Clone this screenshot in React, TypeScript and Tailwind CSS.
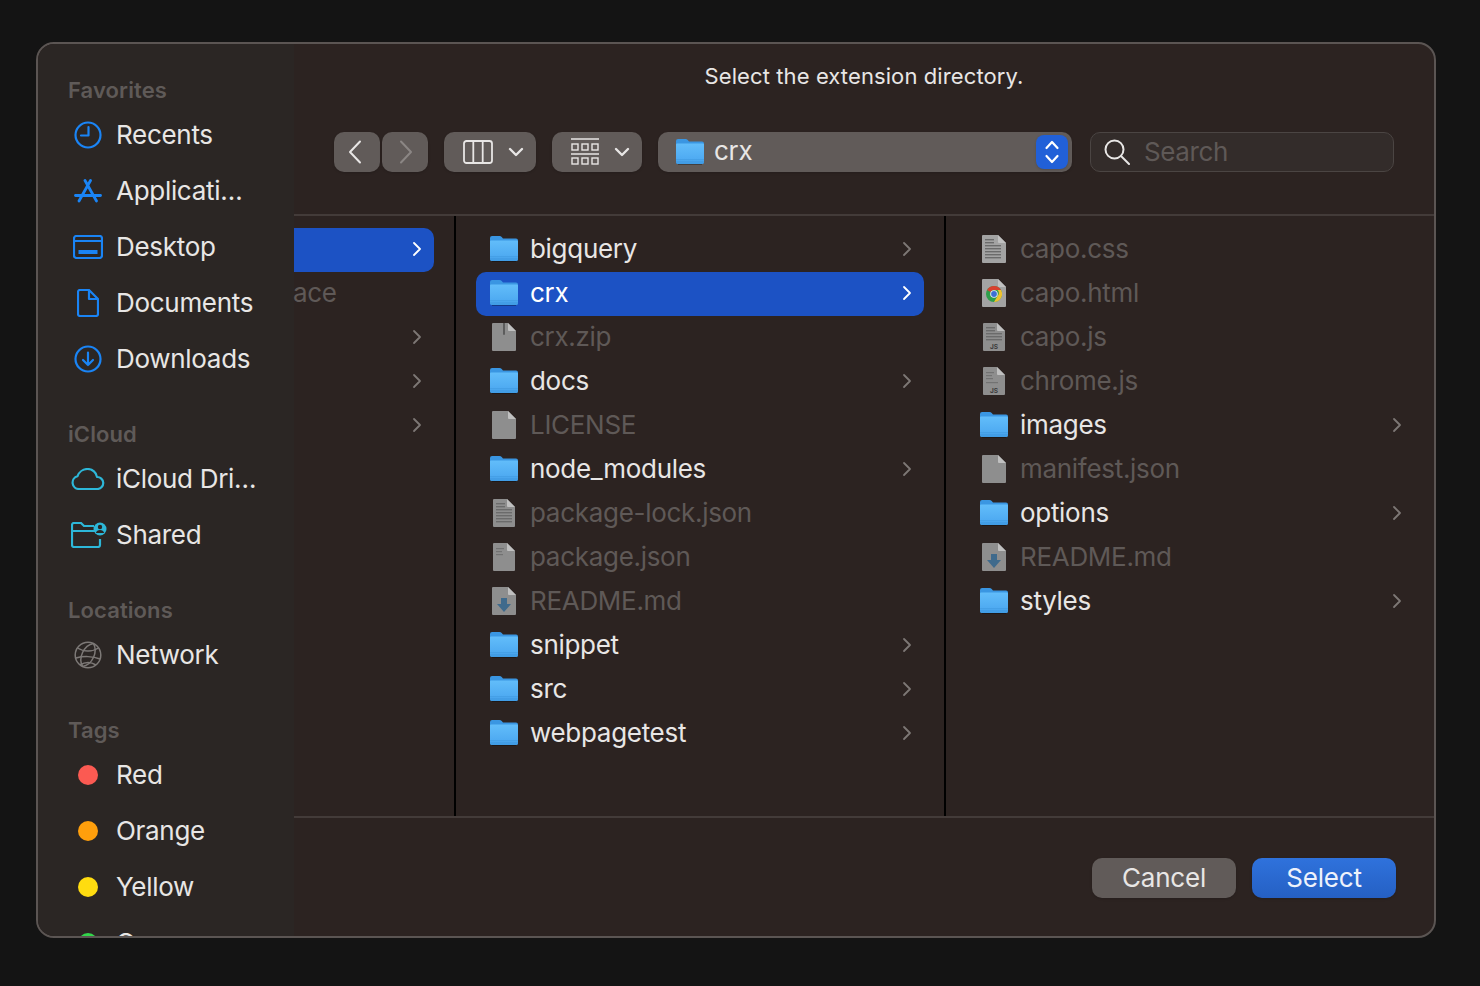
import type { ReactNode } from "react";

// Finder-style open panel, dark mode

const BLUE = "#1a84f5";
const CYAN = "#2db7d8";

type FileKind = "blank" | "zip" | "lines" | "sparse" | "md" | "css" | "chrome" | "js" | "jsLight";
type Entry = { name: string; folder?: boolean; file?: FileKind; selected?: boolean };

const MIDDLE: Entry[] = [
  { name: "bigquery", folder: true },
  { name: "crx", folder: true, selected: true },
  { name: "crx.zip", file: "zip" },
  { name: "docs", folder: true },
  { name: "LICENSE", file: "blank" },
  { name: "node_modules", folder: true },
  { name: "package-lock.json", file: "lines" },
  { name: "package.json", file: "sparse" },
  { name: "README.md", file: "md" },
  { name: "snippet", folder: true },
  { name: "src", folder: true },
  { name: "webpagetest", folder: true },
];

const RIGHT: Entry[] = [
  { name: "capo.css", file: "css" },
  { name: "capo.html", file: "chrome" },
  { name: "capo.js", file: "js" },
  { name: "chrome.js", file: "jsLight" },
  { name: "images", folder: true },
  { name: "manifest.json", file: "blank" },
  { name: "options", folder: true },
  { name: "README.md", file: "md" },
  { name: "styles", folder: true },
];

function Chevron({ color = "#7d7775" }: { color?: string }) {
  return (
    <svg width="10" height="16" viewBox="0 0 10 16" fill="none" stroke={color} strokeWidth="1.8" strokeLinecap="round" strokeLinejoin="round">
      <path d="M2 2l6 6-6 6" />
    </svg>
  );
}

function FolderIcon({ id, width = 28, height = 26 }: { id: string; width?: number; height?: number }) {
  return (
    <svg width={width} height={height} viewBox="0 0 28 26" className="shrink-0">
      <defs>
        <linearGradient id={id} x1="0" y1="0" x2="0" y2="1">
          <stop offset="0" stopColor="#62bdfa" />
          <stop offset="0.75" stopColor="#4fabf2" />
          <stop offset="1" stopColor="#3f9be4" />
        </linearGradient>
      </defs>
      <path d="M0 2a2 2 0 012-2h7.500c1 0 1.600.4 2.200 1l1.300 1.500h13A2 2 0 0128 4.500V23a2 2 0 01-2 2H2a2 2 0 01-2-2z" fill="#3a96e2" />
      <path d="M0 5.500a1 1 0 011-1h26a1 1 0 011 1V23a2 2 0 01-2 2H2a2 2 0 01-2-2z" fill={`url(#${id})`} />
      <path d="M0 20h28v.8H0zM0 22.500h28v.8H0z" fill="#3d94dc" opacity="0.6" />
      <path d="M2 25h24v1H2z" fill="#000" opacity="0.3" />
    </svg>
  );
}

function FileIcon({ kind }: { kind: FileKind }) {
  const narrow = kind === "lines" || kind === "sparse" || kind === "js" || kind === "jsLight";
  const x0 = narrow ? 1 : 0;
  const x1 = narrow ? 23 : 24;
  const body = kind === "css" || kind === "chrome" ? "#a3a3a3" : "#8e8e8e";
  return (
    <svg width="24" height="28" viewBox="0 0 24 28" className="shrink-0">
      <path d={`M${x0} 1a1 1 0 011-1h${x1 - x0 - 9}l8 8v19a1 1 0 01-1 1H${x0 + 1}a1 1 0 01-1-1z`} fill={body} />
      <path d={`M${x1 - 8} 0l8 8h-7a1 1 0 01-1-1z`} fill="#c0c0c0" />
      {kind === "zip" && <path d="M11 0h2v11a1 1 0 01-2 0z" fill="#5c5c5c" />}
      {(kind === "lines" || kind === "js" || kind === "css") && (
        <g fill="#6b6b6b">
          {[4, 7, 10, 13, 16, 19, 22].slice(0, kind === "js" ? 5 : 7).map((y) => (
            <rect key={y} x={x0 + 3} y={y} width={y < 9 ? 9 : 16} height="1.400" />
          ))}
        </g>
      )}
      {(kind === "sparse" || kind === "jsLight") && (
        <g fill="#727272">
          <rect x={x0 + 3} y="5" width="8" height="1.200" />
          <rect x={x0 + 3} y="8" width="6" height="1.200" />
          <rect x={x0 + 3} y="11" width="7" height="1.200" />
          {kind === "jsLight" && <rect x={x0 + 3} y="15" width="12" height="1.200" />}
        </g>
      )}
      {(kind === "js" || kind === "jsLight") && (
        <text x="12" y="26" textAnchor="middle" fontSize="6.500" fontWeight="700" fill="#3a3a3a" fontFamily="Inter, sans-serif">
          JS
        </text>
      )}
      {kind === "md" && <path d="M9 11h6v6h4l-7 8-7-8h4z" fill="#3f6a8c" />}
      {kind === "chrome" && (
        <g>
          <circle cx="12" cy="15" r="8" fill="#2e9e4b" />
          <path d="M5.100 11a8 8 0 0113.900 0H12a4 4 0 00-3.500 2z" fill="#d8402f" />
          <path d="M19 11a8 8 0 01-7 12l3.500-6a4 4 0 000-6z" fill="#efc12e" />
          <circle cx="12" cy="15" r="3.800" fill="#eeeeee" />
          <circle cx="12" cy="15" r="2.900" fill="#3d6fd4" />
        </g>
      )}
    </svg>
  );
}

function Row({ entry, id }: { entry: Entry; id: string }) {
  const textColor = entry.selected ? "text-white" : entry.folder ? "text-[#e8e6e5]" : "text-[#5f5957]";
  return (
    <div className={`flex h-[44px] items-center rounded-[10px] pb-[2px] pl-[14px] pr-[12px] ${entry.selected ? "bg-[#1c52c4]" : ""}`}>
      <div className="flex w-[28px] shrink-0 justify-center">
        {entry.folder ? <FolderIcon id={id} /> : <FileIcon kind={entry.file ?? "blank"} />}
      </div>
      <span className={`ml-[12px] flex-1 text-[26px] leading-none tracking-[-0.3px] ${textColor}`}>{entry.name}</span>
      {entry.folder && <Chevron color={entry.selected ? "#ffffff" : "#7d7775"} />}
    </div>
  );
}

function SidebarLabel({ children }: { children: ReactNode }) {
  return <div className="mb-[3px] h-[28px] pl-[30px] text-[22px] font-semibold leading-[28px] tracking-[0.1px] text-[#5f5a58]">{children}</div>;
}

function SidebarRow({ icon, label }: { icon: ReactNode; label: string }) {
  return (
    <div className="flex h-[56px] items-center pl-[30px]">
      <div className="flex w-[40px] shrink-0 items-center justify-center">{icon}</div>
      <span className="ml-[8px] whitespace-nowrap text-[26px] leading-none tracking-[-0.3px] text-[#e8e6e5]">{label}</span>
    </div>
  );
}

function Dot({ color }: { color: string }) {
  return <div className="h-[20px] w-[20px] rounded-full" style={{ background: color }} />;
}

function Sidebar() {
  return (
    <aside className="h-full w-[256px] shrink-0 overflow-hidden bg-[#2b2624] pt-[32px]">
      <SidebarLabel>Favorites</SidebarLabel>
      <SidebarRow
        label="Recents"
        icon={
          <svg width="28" height="28" viewBox="0 0 28 28" fill="none" stroke={BLUE} strokeWidth="2.200">
            <circle cx="14" cy="14" r="12.500" />
            <path d="M14.500 6v8.500H7" strokeLinecap="round" strokeLinejoin="round" />
          </svg>
        }
      />
      <SidebarRow
        label="Applicati…"
        icon={
          <svg width="28" height="24" viewBox="0 0 28 24" fill="none" stroke={BLUE} strokeWidth="2.800" strokeLinecap="round">
            <path d="M11 1.500L22.500 22M16.500 1.500L5 22" />
            <path d="M1.500 16.500h25" />
          </svg>
        }
      />
      <SidebarRow
        label="Desktop"
        icon={
          <svg width="30" height="24" viewBox="0 0 30 24" fill="none" stroke={BLUE} strokeWidth="2.200">
            <rect x="1" y="1" width="28" height="22" rx="2.500" />
            <path d="M1 6h28" />
            <rect x="5.500" y="15" width="19" height="4" fill={BLUE} stroke="none" />
          </svg>
        }
      />
      <SidebarRow
        label="Documents"
        icon={
          <svg width="22" height="28" viewBox="0 0 22 28" fill="none" stroke={BLUE} strokeWidth="2.200" strokeLinejoin="round">
            <path d="M3 1h9l9 9v15a2 2 0 01-2 2H3a2 2 0 01-2-2V3a2 2 0 012-2z" />
            <path d="M12 1v9h9" />
          </svg>
        }
      />
      <SidebarRow
        label="Downloads"
        icon={
          <svg width="28" height="28" viewBox="0 0 28 28" fill="none" stroke={BLUE} strokeWidth="2.200" strokeLinecap="round" strokeLinejoin="round">
            <circle cx="14" cy="14" r="12.500" />
            <path d="M14 7.500v12.500M9 15l5 5 5-5" />
          </svg>
        }
      />
      <div className="h-[33px]" />
      <SidebarLabel>iCloud</SidebarLabel>
      <SidebarRow
        label="iCloud Dri…"
        icon={
          <svg width="34" height="22" viewBox="0 0 34 22" fill="none" stroke={CYAN} strokeWidth="2.200" strokeLinejoin="round" className="-ml-[1px]">
            <path d="M8 21a6.500 6.500 0 01-1.500-12.800C8 4 12 1 16.500 1c5 0 9 3.500 9.500 8a6 6 0 01.500 12z" />
          </svg>
        }
      />
      <SidebarRow
        label="Shared"
        icon={
          <svg width="36" height="26" viewBox="0 0 36 26" fill="none" className="ml-[2px]">
            <path d="M26 9H1V3a2 2 0 012-2h7l3 3h10M1 9v14a2 2 0 002 2h24a2 2 0 002-2v-6" stroke={CYAN} strokeWidth="2.200" />
            <circle cx="29" cy="7" r="6.500" fill={CYAN} />
            <circle cx="29" cy="5" r="2.200" fill="#2b2624" />
            <path d="M24.800 11c.6-2 2.200-3 4.200-3s3.600 1 4.200 3z" fill="#2b2624" />
          </svg>
        }
      />
      <div className="h-[33px]" />
      <SidebarLabel>Locations</SidebarLabel>
      <SidebarRow
        label="Network"
        icon={
          <svg width="28" height="28" viewBox="0 0 28 28" fill="none" stroke="#7d7977" strokeWidth="1.500">
            <circle cx="14" cy="14" r="12.800" />
            <path d="M14 1.200C6 7 6 21 14 26.800M14 1.200C22 7 22 21 14 26.800" transform="rotate(25 14 14)" />
            <path d="M3.500 7c6 4 15 4 21 0M2 17c7-2 17-2 24 1M6 24c5-3 11-3 16 0" />
          </svg>
        }
      />
      <div className="h-[33px]" />
      <SidebarLabel>Tags</SidebarLabel>
      <SidebarRow label="Red" icon={<Dot color="#fb5a52" />} />
      <SidebarRow label="Orange" icon={<Dot color="#ff9f0c" />} />
      <SidebarRow label="Yellow" icon={<Dot color="#ffdc10" />} />
      <SidebarRow label="Green" icon={<Dot color="#32d74b" />} />
    </aside>
  );
}

function Toolbar() {
  return (
    <div className="mt-[42px] flex h-[40px] pl-[40px]">
      <div className="flex gap-[2px]">
        <div className="flex h-[40px] w-[46px] items-center justify-center rounded-[10px] bg-[#615b59] pr-[4px] shadow-sm">
          <svg width="14" height="24" viewBox="0 0 14 24" fill="none" stroke="#e8e6e5" strokeWidth="2" strokeLinecap="round" strokeLinejoin="round">
            <path d="M12 1.500L2 12l10 10.500" />
          </svg>
        </div>
        <div className="flex h-[40px] w-[46px] items-center justify-center rounded-[10px] bg-[#615b59] pl-[2px] shadow-sm">
          <svg width="14" height="24" viewBox="0 0 14 24" fill="none" stroke="#8b8684" strokeWidth="2" strokeLinecap="round" strokeLinejoin="round">
            <path d="M2 1.500L12 12 2 22.500" />
          </svg>
        </div>
      </div>
      <div className="ml-[16px] flex h-[40px] w-[92px] items-center rounded-[10px] bg-[#615b59] pl-[19px] shadow-sm">
        <svg width="30" height="24" viewBox="0 0 30 24" fill="none" stroke="#e8e6e5" strokeWidth="1.800">
          <rect x="1" y="1" width="28" height="22" rx="2.500" />
          <path d="M10.300 1v22M19.700 1v22" />
        </svg>
        <svg width="16" height="10" viewBox="0 0 16 10" fill="none" stroke="#e8e6e5" strokeWidth="2.400" strokeLinecap="round" strokeLinejoin="round" className="ml-[15px]">
          <path d="M2 2l6 6 6-6" />
        </svg>
      </div>
      <div className="ml-[16px] flex h-[40px] w-[90px] items-center rounded-[10px] bg-[#615b59] pl-[19px] shadow-sm">
        <svg width="28" height="28" viewBox="0 0 28 28" fill="none" stroke="#e8e6e5" strokeWidth="1.400">
          <path d="M0 1h28M0 16h28" strokeWidth="1.600" />
          <rect x="1" y="6" width="6" height="6" />
          <rect x="11" y="6" width="6" height="6" />
          <rect x="21" y="6" width="6" height="6" />
          <rect x="1" y="20" width="6" height="6" />
          <rect x="11" y="20" width="6" height="6" />
          <rect x="21" y="20" width="6" height="6" />
        </svg>
        <svg width="16" height="10" viewBox="0 0 16 10" fill="none" stroke="#e8e6e5" strokeWidth="2.400" strokeLinecap="round" strokeLinejoin="round" className="ml-[15px]">
          <path d="M2 2l6 6 6-6" />
        </svg>
      </div>
      <div className="ml-[16px] flex h-[40px] w-[414px] items-center rounded-[10px] bg-[#615b59] pl-[18px] pr-[4px] shadow-sm">
        <FolderIcon id="path-folder" width={28} height={26} />
        <span className="ml-[10px] flex-1 pb-[2px] text-[26px] leading-none tracking-[-0.3px] text-[#e8e6e5]">crx</span>
        <div className="flex h-[34px] w-[32px] items-center justify-center rounded-[8px] bg-[#2160d8] shadow">
          <svg width="16" height="26" viewBox="0 0 16 26" fill="none" stroke="#ffffff" strokeWidth="2.200" strokeLinecap="round" strokeLinejoin="round">
            <path d="M2.500 9L8 3l5.500 6M2.500 17L8 23l5.500-6" />
          </svg>
        </div>
      </div>
      <div className="ml-[18px] flex h-[40px] w-[304px] items-center rounded-[10px] border border-[#4b4543] bg-[#332c2a] pl-[13px]">
        <svg width="26" height="26" viewBox="0 0 26 26" fill="none" stroke="#e8e6e5" strokeWidth="2" strokeLinecap="round">
          <circle cx="10.500" cy="10.500" r="9" />
          <path d="M17 17l8 8" />
        </svg>
        <span className="ml-[14px] text-[26px] leading-none tracking-[-0.4px] text-[#5f5957]">Search</span>
      </div>
    </div>
  );
}

function FirstColumn() {
  return (
    <div className="h-full w-[162px] shrink-0 border-r-2 border-[#000000] pt-[12px]">
      <div className="flex h-[44px] w-[140px] items-center justify-end rounded-r-[10px] bg-[#1c52c4] pb-[2px] pr-[12px]">
        <Chevron color="#ffffff" />
      </div>
      <div className="-ml-[1px] flex h-[44px] items-center pb-[2px] text-[26px] leading-none tracking-[-0.3px] text-[#5f5957]">ace</div>
      {[0, 1, 2].map((i) => (
        <div key={i} className="flex h-[44px] w-[140px] items-center justify-end pb-[2px] pr-[12px]">
          <Chevron />
        </div>
      ))}
    </div>
  );
}

export default function App() {
  return (
    <div className="h-[986px] w-[1480px] overflow-hidden bg-[#141414] pl-[36px] pt-[42px] font-[Inter,sans-serif]">
      <div className="flex h-[896px] w-[1400px] overflow-hidden rounded-[18px] border-2 border-[#5b5553] bg-[#2c2321]">
        <Sidebar />
        <main className="flex min-w-0 flex-1 flex-col">
          <header className="h-[172px] shrink-0 border-b-2 border-[#433b39] pt-[18px]">
            <div className="text-center text-[22px] font-normal leading-[28px] tracking-[0.1px] text-[#e8e6e5]">Select the extension directory.</div>
            <Toolbar />
          </header>
          <div className="flex h-[600px] shrink-0">
            <FirstColumn />
            <div className="h-full w-[490px] shrink-0 border-r-2 border-[#000000] px-[20px] pt-[12px]">
              {MIDDLE.map((entry, i) => (
                <Row key={entry.name} entry={entry} id={`mid-${i}`} />
              ))}
            </div>
            <div className="h-full flex-1 px-[20px] pt-[12px]">
              {RIGHT.map((entry, i) => (
                <Row key={entry.name} entry={entry} id={`right-${i}`} />
              ))}
            </div>
          </div>
          <footer className="flex flex-1 items-start justify-end gap-[16px] border-t-2 border-[#433b39] pr-[38px] pt-[40px]">
            <button type="button" className="h-[40px] w-[144px] rounded-[10px] bg-[#615b59] text-[26px] leading-none tracking-[-0.2px] text-[#e8e6e5] shadow-sm">
              Cancel
            </button>
            <button type="button" className="h-[40px] w-[144px] rounded-[10px] bg-gradient-to-b from-[#2f72dc] to-[#2560c4] text-[26px] leading-none tracking-[-0.2px] text-[#eef2fb] shadow-sm">
              Select
            </button>
          </footer>
        </main>
      </div>
    </div>
  );
}
